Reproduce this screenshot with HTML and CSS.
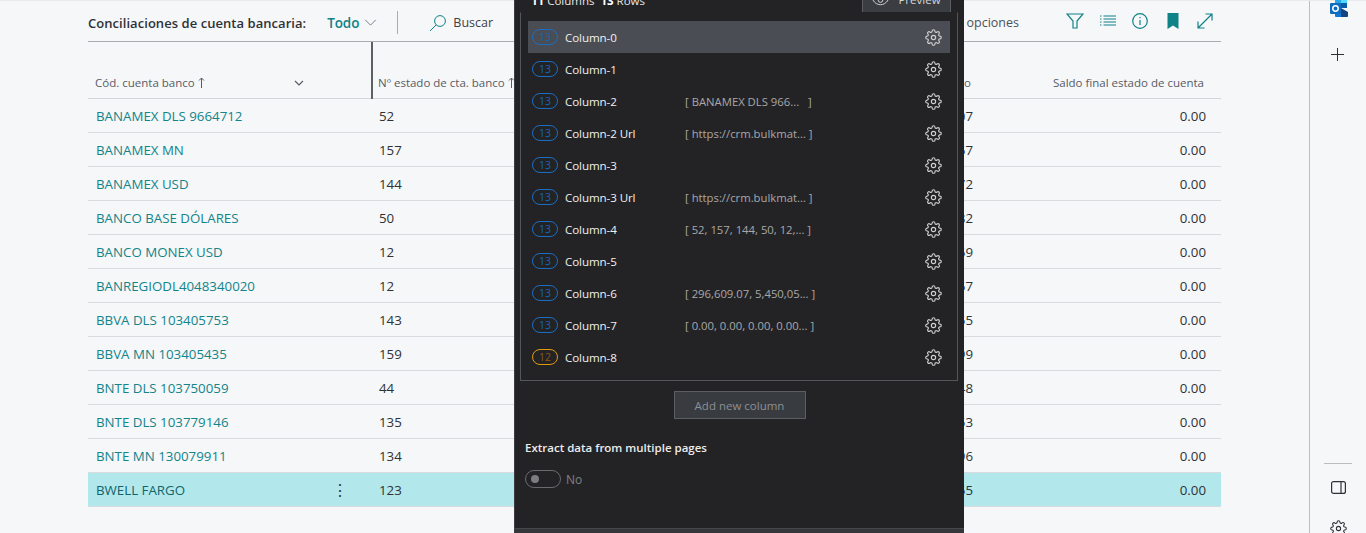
FILE: index.html
```html
<!DOCTYPE html>
<html lang="es">
<head>
<meta charset="utf-8">
<title>Conciliaciones de cuenta bancaria</title>
<link rel="stylesheet" href="styles.css">
</head>
<body>
<svg class="defs" aria-hidden="true"><symbol id="gear" viewBox="0 0 24 24"><circle cx="12" cy="12" r="3"/><path d="M19.4 15a1.65 1.65 0 0 0 .33 1.82l.06.06a2 2 0 0 1 0 2.83 2 2 0 0 1-2.83 0l-.06-.06a1.65 1.65 0 0 0-1.82-.33 1.65 1.65 0 0 0-1 1.51V21a2 2 0 0 1-2 2 2 2 0 0 1-2-2v-.09A1.65 1.65 0 0 0 9 19.4a1.65 1.65 0 0 0-1.82.33l-.06.06a2 2 0 0 1-2.83 0 2 2 0 0 1 0-2.83l.06-.06a1.65 1.65 0 0 0 .33-1.82 1.65 1.65 0 0 0-1.51-1H3a2 2 0 0 1-2-2 2 2 0 0 1 2-2h.09A1.65 1.65 0 0 0 4.6 9a1.65 1.65 0 0 0-.33-1.82l-.06-.06a2 2 0 0 1 0-2.83 2 2 0 0 1 2.83 0l.06.06a1.65 1.65 0 0 0 1.82.33H9a1.65 1.65 0 0 0 1-1.51V3a2 2 0 0 1 2-2 2 2 0 0 1 2 2v.09a1.65 1.65 0 0 0 1 1.51 1.65 1.65 0 0 0 1.82-.33l.06-.06a2 2 0 0 1 2.83 0 2 2 0 0 1 0 2.83l-.06.06a1.65 1.65 0 0 0-.33 1.82V9a1.65 1.65 0 0 0 1.51 1H21a2 2 0 0 1 2 2 2 2 0 0 1-2 2h-.09a1.65 1.65 0 0 0-1.51 1z"/></symbol></svg>
<div class="page">
  <main class="main">
    <div class="toolbar">
      <span class="title">Conciliaciones de cuenta bancaria:</span>
      <span class="todo">Todo</span>
      <svg class="chev" viewBox="0 0 14 8"><path d="M1 1l6 6 6-6"/></svg>
      <span class="sep"></span>
      <button class="search"><svg viewBox="0 0 18 18"><circle cx="11" cy="7" r="5.4"/><path d="M7 11l-6 6"/></svg>Buscar</button>
      <span class="more">Más opciones</span>
      <div class="tools">
        <svg viewBox="0 0 18 18"><path d="M1 2h16l-6 7v7H7V9z"/></svg>
        <svg viewBox="0 0 18 18"><path d="M1 4h1.500M4.500 4H17M1 7h1.500M4.500 7H17M1 10h1.500M4.500 10H17M1 13h1.500M4.500 13H17"/></svg>
        <svg viewBox="0 0 18 18"><circle cx="9" cy="9" r="7.300"/><path d="M9 8v5M9 5v1.200"/></svg>
        <svg viewBox="0 0 18 18"><path class="fill" d="M3.500 1h11v16l-5.500-3.500L3.500 17z"/></svg>
        <svg viewBox="0 0 18 18"><path d="M2 16L16 2M9.500 2H16v6.500M2 9.500V16h6.500"/></svg>
      </div>
    </div>
    <table class="grid">
      <colgroup><col class="c1"><col class="c2"><col class="c3"><col class="c4"></colgroup>
      <thead>
        <tr>
          <th class="first"><span class="hd">Cód. cuenta banco</span><svg class="arrow" viewBox="0 0 7 11"><path d="M3.500 11V1M1 3.500L3.500 1 6 3.500"/></svg><svg class="hchev" viewBox="0 0 10 6"><path d="M1 1l4 4 4-4"/></svg></th>
          <th class="second">Nº estado de cta. banco<svg class="arrow" viewBox="0 0 7 11"><path d="M3.500 11V1M1 3.500L3.500 1 6 3.500"/></svg></th>
          <th class="num">Saldo final estado de cuento</th>
          <th class="num">Saldo final estado de cuenta</th>
        </tr>
      </thead>
      <tbody>
        <tr><td><a>BANAMEX DLS 9664712</a></td><td>52</td><td class="num">296,609.07</td><td class="num">0.00</td></tr>
        <tr><td><a>BANAMEX MN</a></td><td>157</td><td class="num">5,450,051.67</td><td class="num">0.00</td></tr>
        <tr><td><a>BANAMEX USD</a></td><td>144</td><td class="num">120,044.72</td><td class="num">0.00</td></tr>
        <tr><td><a>BANCO BASE DÓLARES</a></td><td>50</td><td class="num">88,310.82</td><td class="num">0.00</td></tr>
        <tr><td><a>BANCO MONEX USD</a></td><td>12</td><td class="num">41,527.69</td><td class="num">0.00</td></tr>
        <tr><td><a>BANREGIODL4048340020</a></td><td>12</td><td class="num">10,236.67</td><td class="num">0.00</td></tr>
        <tr><td><a>BBVA DLS 103405753</a></td><td>143</td><td class="num">74,118.55</td><td class="num">0.00</td></tr>
        <tr><td><a>BBVA MN 103405435</a></td><td>159</td><td class="num">932,640.99</td><td class="num">0.00</td></tr>
        <tr><td><a>BNTE DLS 103750059</a></td><td>44</td><td class="num">65,203.48</td><td class="num">0.00</td></tr>
        <tr><td><a>BNTE DLS 103779146</a></td><td>135</td><td class="num">27,481.53</td><td class="num">0.00</td></tr>
        <tr><td><a>BNTE MN 130079911</a></td><td>134</td><td class="num">318,772.96</td><td class="num">0.00</td></tr>
        <tr class="sel"><td><a>BWELL FARGO</a><span class="dots">⋮</span></td><td>123</td><td class="num">54,906.65</td><td class="num">0.00</td></tr>
      </tbody>
    </table>
  </main>
  <aside class="rail">
    <svg class="outlook" viewBox="0 0 18 18"><path fill="#28a8ea" d="M5 -2h12v10H5z"/><path fill="#0f78d4" d="M5 8h6v9H6a1 1 0 0 1-1-1z"/><path fill="#50d9ff" d="M11 -2h6v5h-6z"/><path fill="#14447d" d="M11 8l7 4v4a1 1 0 0 1-1 1h-6z"/><path fill="#0a5ca8" d="M11 3h6v5h-6z"/><rect fill="#0f6cbd" x="0" y="3" width="11" height="11" rx="1"/><circle cx="5.500" cy="8.500" r="2.700" fill="none" stroke="#fff" stroke-width="1.500"/></svg>
    <svg class="plus" viewBox="0 0 13 13"><path d="M6.500 0v13M0 6.500h13"/></svg>
    <div class="rail-bottom">
      <span class="rule"></span>
      <svg class="pane" viewBox="0 0 15 13"><rect x=".6" y=".6" width="13.800" height="11.800" rx="2"/><path d="M10 .6v11.800"/></svg>
      <svg class="rail-gear"><use href="#gear"/></svg>
    </div>
  </aside>
</div>
<section class="panel">
  <div class="counts">
    <span><b>11</b> Columns &nbsp;<b>13</b> Rows</span>
    <button class="preview"><svg viewBox="0 0 18 12"><path d="M1 6c2-3.500 5-5 8-5s6 1.500 8 5c-2 3.500-5 5-8 5s-6-1.500-8-5z"/><circle cx="9" cy="6" r="2.500"/></svg>Preview</button>
  </div>
  <div class="cols">
    <div class="col active"><span class="pill">13</span><span class="name">Column-0</span><span class="val"></span><svg class="gear"><use href="#gear"/></svg></div>
    <div class="col"><span class="pill">13</span><span class="name">Column-1</span><span class="val"></span><svg class="gear"><use href="#gear"/></svg></div>
    <div class="col"><span class="pill">13</span><span class="name">Column-2</span><span class="val">[ BANAMEX DLS 966...&nbsp;&nbsp; ]</span><svg class="gear"><use href="#gear"/></svg></div>
    <div class="col"><span class="pill">13</span><span class="name">Column-2 Url</span><span class="val">[ https://crm.bulkmat... ]</span><svg class="gear"><use href="#gear"/></svg></div>
    <div class="col"><span class="pill">13</span><span class="name">Column-3</span><span class="val"></span><svg class="gear"><use href="#gear"/></svg></div>
    <div class="col"><span class="pill">13</span><span class="name">Column-3 Url</span><span class="val">[ https://crm.bulkmat... ]</span><svg class="gear"><use href="#gear"/></svg></div>
    <div class="col"><span class="pill">13</span><span class="name">Column-4</span><span class="val">[ 52, 157, 144, 50, 12,... ]</span><svg class="gear"><use href="#gear"/></svg></div>
    <div class="col"><span class="pill">13</span><span class="name">Column-5</span><span class="val"></span><svg class="gear"><use href="#gear"/></svg></div>
    <div class="col"><span class="pill">13</span><span class="name">Column-6</span><span class="val">[ 296,609.07, 5,450,05... ]</span><svg class="gear"><use href="#gear"/></svg></div>
    <div class="col"><span class="pill">13</span><span class="name">Column-7</span><span class="val">[ 0.00, 0.00, 0.00, 0.00... ]</span><svg class="gear"><use href="#gear"/></svg></div>
    <div class="col"><span class="pill warn">12</span><span class="name">Column-8</span><span class="val"></span><svg class="gear"><use href="#gear"/></svg></div>
  </div>
  <div class="add-row"><button class="add">Add new column</button></div>
  <h4 class="extract">Extract data from multiple pages</h4>
  <div class="toggle-row"><span class="toggle"></span><span class="no">No</span></div>
  <div class="panel-foot"></div>
</section>
</body>
</html>
```
FILE: styles.css
```css
* { box-sizing: border-box; }
html, body { margin: 0; height: 533px; overflow: hidden; }
body { background: #f6f7f9; font-family: "Open Sans", "Noto Sans", sans-serif; color: #2f3235; position: relative; }
.defs { width: 0; height: 0; position: absolute; }
.page { display: flex; height: 533px; border-top: 1px solid #e9eaec; }
.main { width: 1309px; padding: 0 88px; flex: none; }
.toolbar { display: flex; align-items: center; height: 41px; padding-top: 3px; border-bottom: 1px solid #a9acb0; }
.title { font-size: 13px; font-weight: 600; letter-spacing: .05px; color: #2f3235; }
.todo { font-size: 13.500px; font-weight: 600; color: #0f8287; margin-left: 21px; letter-spacing: -.1px; }
.chev { width: 13px; height: 7px; margin-left: 5px; fill: none; stroke: #6b7078; stroke-width: 1; }
.sep { width: 1px; height: 23px; background: #a9acb0; margin-left: 20px; }
.search { display: flex; align-items: center; gap: 6px; background: none; border: 0; padding: 0; margin-left: 31px; font: inherit; font-size: 12.500px; color: #3d4145; }
.search svg { width: 18px; height: 18px; fill: none; stroke: #0f8287; stroke-width: 1; }
.more { margin-left: auto; font-size: 12.500px; color: #4d5156; }
.tools { display: flex; gap: 14.500px; margin: -3px 7px 0 47px; }
.tools svg { width: 18px; height: 18px; fill: none; stroke: #0f8287; stroke-width: 1.200; }
.tools .fill { fill: #0f8287; stroke: none; }
.grid { width: 1133px; table-layout: fixed; border-collapse: collapse; }
.c1 { width: 284px; } .c2 { width: 148px; } .c3 { width: 468px; } .c4 { width: 233px; }
th { height: 56px; vertical-align: bottom; padding: 0 0 8px 7px; font-size: 11.500px; font-weight: 400; color: #565c66; text-align: left; border-bottom: 1px solid #d4d6d9; white-space: nowrap; }
th.first { position: relative; }
.arrow { width: 7px; height: 11px; margin-left: 3px; fill: none; stroke: #565c66; stroke-width: 1; vertical-align: -1px; }
.hchev { position: absolute; left: 206px; bottom: 12px; width: 10px; height: 6px; fill: none; stroke: #565c66; stroke-width: 1.200; }
th.second { border-left: 2px solid #5c5f63; padding-left: 5px; }
td { height: 34px; padding: 2px 0 0 7px; font-size: 13.300px; border-bottom: 1px solid #d9dbde; position: relative; white-space: nowrap; }
td a { color: #12848a; }
td:first-child { padding-left: 8px; }
th.num { text-align: right; padding-right: 17px; padding-left: 0; }
td.num { text-align: right; padding-right: 15px; padding-left: 0; }
.sel td { background: #b2e8ec; }
.sel a { color: #10656b; }
.dots { position: absolute; left: 244px; top: 7px; font-size: 16px; line-height: 20px; color: #33373b; }
.rail { flex: 1; border-left: 1px solid #bdbec0; display: flex; flex-direction: column; align-items: center; }
.outlook { width: 18px; height: 18px; margin: -1px 0 0 2px; flex: none; }
.plus { width: 13px; height: 13px; margin: 30px 2px 0 0; fill: none; stroke: #2f3235; stroke-width: 1; flex: none; }
.rail-bottom { margin-top: auto; margin-bottom: -4px; display: flex; flex-direction: column; align-items: center; }
.rule { width: 28px; height: 1px; background: #bcbdbf; }
.pane { width: 15px; height: 13px; margin-top: 17px; fill: none; stroke: #2f3235; stroke-width: 1.200; }
.rail-gear { width: 17px; height: 17px; margin-top: 26px; fill: none; stroke: #2f3235; stroke-width: 1.500; }
.panel { position: absolute; left: 514px; top: -16px; width: 450px; height: 549px; background: #232326; border-left: 1px solid #3d3e42; color: #e8e8e8; font-size: 12px; display: flex; flex-direction: column; }
.counts { display: flex; justify-content: space-between; align-items: flex-end; height: 29px; padding: 0 13px 0 16px; }
.counts span { line-height: 18px; font-size: 11.500px; position: relative; top: -3px; }
.counts b { font-weight: 700; color: #fff; }
.preview { display: flex; align-items: center; justify-content: center; gap: 9px; width: 89px; height: 29px; padding: 2px 0 0; background: #3a3d42; border: 1px solid #5b5e63; color: #d8d8d8; font: inherit; font-size: 11.500px; }
.preview svg { width: 17px; height: 12px; fill: none; stroke: #d8d8d8; stroke-width: 1; }
.cols { margin: -1px 6px 0 5px; border: 1px solid #55565a; border-top-color: #232326; padding: 8px 7px 6px; height: 369px; }
.col { display: flex; align-items: center; height: 32px; padding: 0 8px 0 4px; }
.col.active { background: #4a4d54; }
.pill { width: 26px; height: 16px; border: 1px solid #1a6dc4; border-radius: 8px; color: #1a62b5; font-size: 10.500px; line-height: 14px; text-align: center; flex: none; }
.pill.warn { border-color: #e09a0c; color: #8a5a10; }
.name { width: 121px; margin-left: 7px; font-size: 11.600px; color: #f0f0f0; letter-spacing: -.1px; white-space: nowrap; }
.val { flex: 1; margin-left: -1px; font-size: 11.300px; color: #a8a8a8; white-space: nowrap; }
.gear { width: 17px; height: 17px; fill: none; stroke: #cfcfcf; stroke-width: 1.600; flex: none; }
.add-row { display: flex; justify-content: center; padding-top: 10px; }
.add { width: 132px; height: 28px; background: #383b40; border: 1px solid #5b5e63; color: #8d8f93; font: inherit; font-size: 11.500px; padding: 0; }
.extract { margin: 21px 0 0 10px; font-size: 11.500px; font-weight: 600; line-height: 16px; color: #ececec; }
.toggle-row { display: flex; align-items: center; gap: 5px; margin: 14px 0 0 10px; }
.toggle { width: 36px; height: 18px; border: 1px solid #6a6b6e; border-radius: 9px; position: relative; }
.toggle::after { content: ""; position: absolute; left: 5px; top: 4px; width: 8px; height: 8px; border-radius: 50%; background: #7c7d80; }
.no { font-size: 12px; color: #808184; }
.panel-foot { margin-top: auto; height: 5px; background: #35363a; border-top: 1px solid #46474b; }
```
